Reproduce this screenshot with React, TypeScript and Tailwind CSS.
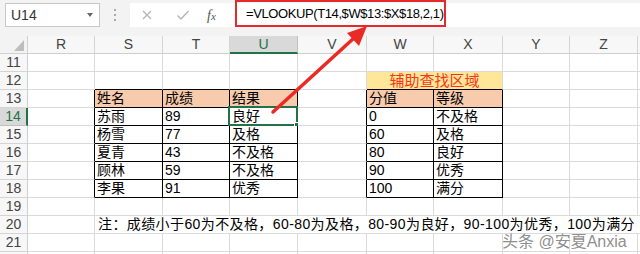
import React from "react";

const COLS = ["R", "S", "T", "U", "V", "W", "X", "Y", "Z"];
const ROWS = [11, 12, 13, 14, 15, 16, 17, 18, 19, 20, 21, 22];

const data: Record<string, string> = {
  S13: "姓名", T13: "成绩", U13: "结果", W13: "分值", X13: "等级",
  S14: "苏雨", T14: "89", U14: "良好", W14: "0", X14: "不及格",
  S15: "杨雪", T15: "77", U15: "及格", W15: "60", X15: "及格",
  S16: "夏青", T16: "43", U16: "不及格", W16: "80", X16: "良好",
  S17: "顾林", T17: "59", U17: "不及格", W17: "90", X17: "优秀",
  S18: "李果", T18: "91", U18: "优秀", W18: "100", X18: "满分",
};

const font = { fontFamily: '"Liberation Sans","Noto Sans CJK SC",sans-serif' };

function Cell({ col, row }: { col: string; row: number }) {
  const inT = row >= 13 && row <= 18;
  const rightBlack = inT && ["R", "S", "T", "U", "V", "W", "X"].includes(col);
  const bottomBlack =
    row >= 12 && row <= 18 && ["S", "T", "U", "W", "X"].includes(col);
  const peach = row === 13 && ["S", "T", "U", "W", "X"].includes(col);
  const selected = col === "U" && row === 14;
  const text = data[col + row] ?? "";
  return (
    <div
      className={`relative h-[18px] border-r border-b px-[2px] text-[14px] leading-[17px] text-black whitespace-nowrap ${
        rightBlack ? "border-r-black" : "border-r-[#dadada]"
      } ${bottomBlack ? "border-b-black" : "border-b-[#dadada]"} ${
        peach ? "bg-[#f8cbad]" : "bg-white"
      }`}
    >
      {text}
      {selected && (
        <div className="absolute left-[-2px] top-[-2px] right-[-1px] bottom-[-1px] border-2 border-[#217346]">
          <div className="absolute right-[-4px] bottom-[-4px] w-[6px] h-[6px] bg-[#217346] border border-white" />
        </div>
      )}
    </div>
  );
}

export default function App() {
  return (
    <div className="relative w-[640px] h-[254px] overflow-hidden bg-white" style={font}>
      {/* toolbar */}
      <div className="h-[36px] bg-[#f3f3f3] flex items-start pt-[3px]">
        <div className="ml-[5px] w-[95px] h-[24px] bg-white border border-[#c8c8c8] flex items-center justify-between pl-[5px] pr-[6px]">
          <span className="text-[14px] text-[#333]">U14</span>
          <span className="w-0 h-0 border-l-[3px] border-r-[3px] border-t-[4px] border-l-transparent border-r-transparent border-t-[#666]" />
        </div>
        <div className="w-[30px] h-[24px] flex flex-col items-center justify-center gap-[3px]">
          <span className="w-[2px] h-[2px] bg-[#aaa]" />
          <span className="w-[2px] h-[2px] bg-[#aaa]" />
          <span className="w-[2px] h-[2px] bg-[#aaa]" />
        </div>
        <div className="flex-1 h-[24px] bg-white flex items-center">
          <div className="w-[105px] flex items-center text-[#b0b0b0]">
            <svg width="12" height="12" viewBox="0 0 12 12" className="ml-[11px]">
              <path d="M2 2 L10 10 M10 2 L2 10" stroke="#b5b5b5" strokeWidth="1.3" />
            </svg>
            <svg width="14" height="12" viewBox="0 0 14 12" className="ml-[23px]">
              <path d="M1.5 6.5 L5 10 L12.5 2" stroke="#b5b5b5" strokeWidth="1.4" fill="none" />
            </svg>
            <span className="ml-[17px] text-[14px] italic text-[#555]" style={{ fontFamily: '"Liberation Serif",serif' }}>
              f<span className="text-[11px]">x</span>
            </span>
          </div>
          <div className="h-[27px] -mt-[3px] w-[211px] border-[2.5px] border-[#e42a2a] flex items-center pl-[9px] text-[13px] tracking-[-0.4px] text-black whitespace-nowrap">
            =VLOOKUP(T14,$W$13:$X$18,2,1)
          </div>
        </div>
      </div>

      {/* sheet */}
      <div className="grid grid-cols-[28px_67px_68px_67px_68px_69px_67px_69px_67px_68px_1fr]">
        {/* header row */}
        <div className="h-[18px] bg-[#f3f3f3] border-r border-b border-[#d0d0d0] flex items-end justify-end pr-[3px] pb-[2px]">
          <span className="w-0 h-0" style={{ borderBottom: "11px solid #bdbdbd", borderLeft: "10px solid transparent" }} />
        </div>
        {COLS.map((c) => (
          <div
            key={c}
            className={`h-[18px] border-r text-center text-[14px] leading-[17px] ${
              c === "U"
                ? "bg-[#d9d9d9] text-[#217346] border-r-[#c0c0c0] border-b-2 border-b-[#217346]"
                : "bg-[#f7f7f7] text-[#444] border-r-[#d4d4d4] border-b border-b-[#cfcfcf]"
            }`}
          >
            {c}
          </div>
        ))}
        <div className="h-[18px] bg-[#f7f7f7] border-b border-b-[#cfcfcf]" />

        {ROWS.map((r) => (
          <React.Fragment key={r}>
            <div
              className={`h-[18px] border-b text-center text-[14px] leading-[17px] ${
                r === 14
                  ? "bg-[#d9d9d9] text-[#217346] border-r-2 border-r-[#217346] border-b-[#c0c0c0]"
                  : "bg-[#f7f7f7] text-[#444] border-r border-r-[#cfcfcf] border-b-[#d4d4d4]"
              }`}
            >
              {r === 22 ? "" : r}
            </div>
            {r === 12 ? (
              <>
                {["R", "S", "T", "U", "V"].map((c) => (
                  <Cell key={c} col={c} row={r} />
                ))}
                <div className="col-span-2 h-[18px] bg-[#ffe699] border-r border-r-[#dadada] border-b border-b-black text-center text-[15px] leading-[17px] text-[#f5361a]">
                  辅助查找区域
                </div>
                <Cell col="Y" row={r} />
                <Cell col="Z" row={r} />
              </>
            ) : r === 20 ? (
              <>
                <Cell col="R" row={r} />
                <div className="col-span-9 h-[18px] bg-white border-b border-b-[#dadada] pl-[3px] text-[14px] tracking-[0.4px] leading-[17px] text-black whitespace-nowrap">
                  注：成绩小于60为不及格，60-80为及格，80-90为良好，90-100为优秀，100为满分
                </div>
              </>
            ) : (
              COLS.map((c) => <Cell key={c} col={c} row={r} />)
            )}
            {r !== 20 && <div className="h-[18px] bg-white border-b border-b-[#dadada]" />}
          </React.Fragment>
        ))}
      </div>

      {/* arrow */}
      <svg className="absolute left-0 top-0 pointer-events-none" width="640" height="254">
        <line x1="273" y1="112" x2="354" y2="38" stroke="#ea2b25" strokeWidth="3.5" strokeLinecap="round" />
        <polygon points="367,26 359,46 347,33" fill="#ea2b25" />
      </svg>

      {/* watermark */}
      <div
        className="absolute left-[502px] top-[231px] text-[16px] leading-[22px] text-[#707070]/80 whitespace-nowrap"
        style={{ textShadow: "0 0 1px #fff, 0 0 1px #fff" }}
      >
        头条 @安夏Anxia
      </div>
    </div>
  );
}
